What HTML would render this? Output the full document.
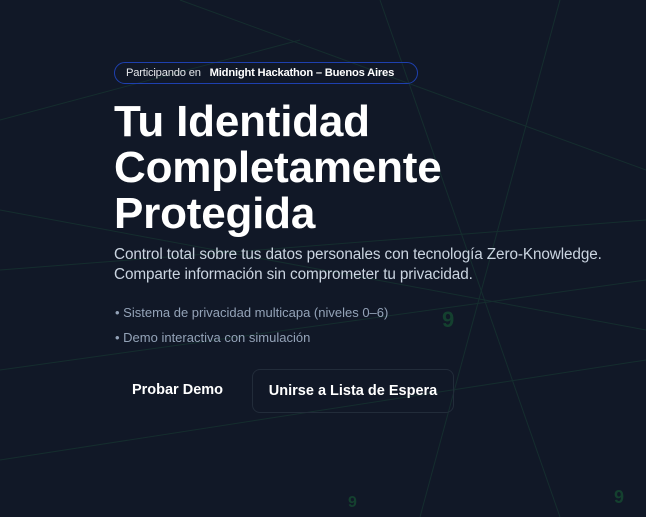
<!DOCTYPE html>
<html><head><meta charset="utf-8"><style>
html,body{margin:0;padding:0;width:646px;height:517px;overflow:hidden;background:#111827;font-family:"Liberation Sans",sans-serif;}
.bg{position:absolute;left:0;top:0}
.badge{position:absolute;left:114px;top:62px;width:304px;height:22px;border:1px solid #1e40af;border-radius:12px;box-sizing:border-box;color:#e5e7eb;font-size:11.2px;line-height:20px;padding-left:11px;white-space:nowrap;letter-spacing:-0.2px}
.badge b{color:#fff;margin-left:6px}
h1{position:absolute;left:114px;top:99px;margin:0;color:#fff;font-size:44px;line-height:46px;font-weight:bold;letter-spacing:-0.2px}
.p{position:absolute;left:114px;top:245px;color:#cbd5e1;font-size:15.3px;line-height:20px;letter-spacing:-0.1px;white-space:nowrap}
.li{position:absolute;left:115px;color:#94a3b8;font-size:13px;white-space:nowrap}
.b1{position:absolute;left:114px;top:370px;width:127px;height:42px;color:#fff;font-weight:bold;font-size:14.5px;line-height:40px;text-align:center}
.b2{position:absolute;left:252px;top:369px;width:202px;height:44px;box-sizing:border-box;border:1px solid #222c3a;border-radius:8px;color:#fff;font-weight:bold;font-size:14.5px;line-height:42px;text-align:center}
</style></head><body>
<svg class="bg" width="646" height="517" viewBox="0 0 646 517">
<g stroke="#1b4d3a" stroke-width="1" opacity="0.4" fill="none">
<line x1="0" y1="210" x2="646" y2="330"/>
<line x1="0" y1="270" x2="646" y2="220"/>
<line x1="180" y1="0" x2="646" y2="170"/>
<line x1="0" y1="370" x2="646" y2="280"/>
<line x1="560" y1="0" x2="420" y2="517"/>
<line x1="380" y1="0" x2="560" y2="517"/>
<line x1="0" y1="460" x2="646" y2="360"/>
<line x1="0" y1="120" x2="300" y2="40"/>
</g>
<text x="442" y="327" fill="#14402f" font-family="Liberation Sans" font-weight="bold" font-size="22">9</text>
<text x="348" y="507" fill="#14402f" font-family="Liberation Sans" font-weight="bold" font-size="16">9</text>
<text x="614" y="503" fill="#14402f" font-family="Liberation Sans" font-weight="bold" font-size="18">9</text>
</svg>
<div class="badge">Participando en <b>Midnight Hackathon – Buenos Aires</b></div>
<h1>Tu Identidad<br>Completamente<br>Protegida</h1>
<div class="p">Control total sobre tus datos personales con tecnología Zero-Knowledge.<br>Comparte información sin comprometer tu privacidad.</div>
<div class="li" style="top:305px">• Sistema de privacidad multicapa (niveles 0–6)</div>
<div class="li" style="top:330px">• Demo interactiva con simulación</div>
<div class="b1">Probar Demo</div>
<div class="b2">Unirse a Lista de Espera</div>
</body></html>
